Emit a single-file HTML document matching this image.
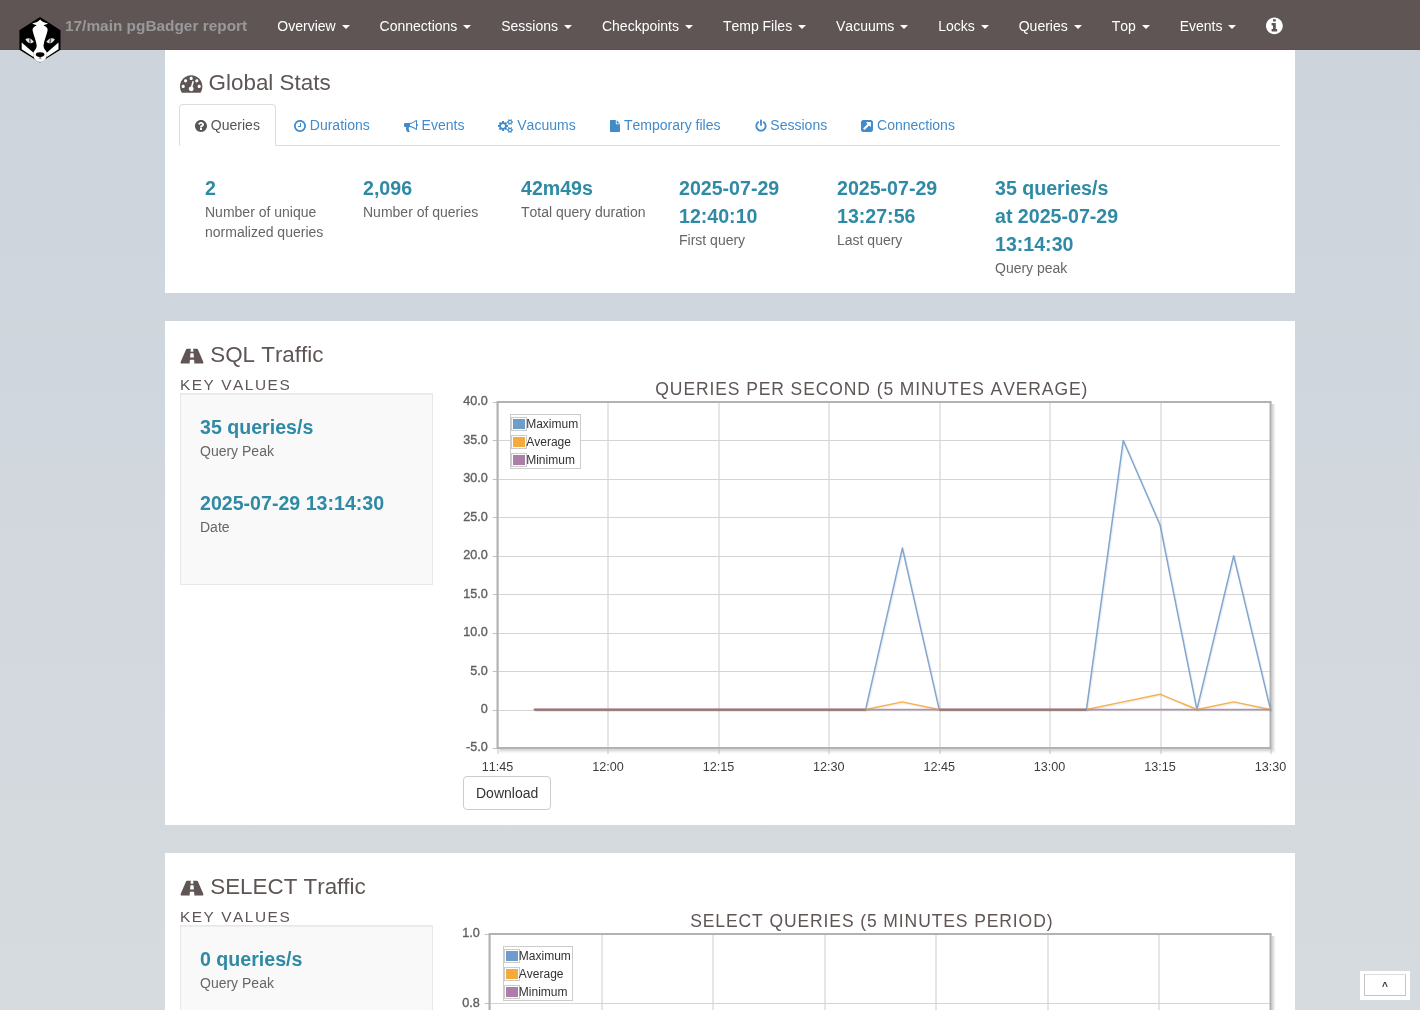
<!DOCTYPE html>
<html lang="en"><head><meta charset="utf-8"><title>pgBadger :: 17/main</title>
<style>
*{box-sizing:border-box}
html,body{margin:0;padding:0}
html{height:100%;overflow:hidden}
body{
  font-kerning:none;font-variant-ligatures:none;
  width:1420px;height:1010px;position:relative;overflow:hidden;
  font-family:"Liberation Sans",sans-serif;font-size:14px;line-height:20px;color:#333;
  background:linear-gradient(180deg,#cdd4dc 0px,#cdd4dc 50px,#d6dbdf 1010px);
}
a{text-decoration:none;color:#428bca}
ul{list-style:none;margin:0;padding:0}
svg.fa{position:relative;top:1px;height:1em;vertical-align:-0.142857em;fill:currentColor;display:inline-block;overflow:visible}

/* ---------- navbar ---------- */
#navbar{will-change:transform;position:absolute;left:0;top:0;width:1420px;height:50px;background:#5f5555;border-bottom:1px solid #5c5150;z-index:10}
#logo{position:absolute;left:18px;top:15px;width:44px;height:49px;z-index:11}
#brand{position:absolute;left:50px;top:1px;height:50px;padding:15px;font-size:15.4px;line-height:20px;font-weight:bold;color:#999;white-space:nowrap}
#menu{position:absolute;left:262.3px;top:1px;height:50px;white-space:nowrap;display:flex}
#menu li{display:block}
#menu li a{display:block;padding:15px;line-height:20px;color:#fff;font-size:14px}
.caret{display:inline-block;width:0;height:0;margin-left:2px;vertical-align:middle;border-top:4px solid #fff;border-right:4px solid transparent;border-left:4px solid transparent}
#menu li a .fa{font-size:19.6px;top:0}

/* ---------- sections ---------- */
.item{will-change:transform;position:absolute;left:165px;width:1130px;background:#fff}
.item h2{position:absolute;left:15px;margin:0;font-size:22.4px;line-height:24.64px;font-weight:normal;color:#5f5555;white-space:nowrap}
h3{margin:0;font-size:15.4px;line-height:17px;font-weight:normal;letter-spacing:1.54px;text-transform:uppercase;color:#5f5555;white-space:nowrap}

/* tabs */
.tabs{position:absolute;left:14px;top:55px;width:1101px;height:42px;border-bottom:1px solid #ddd;display:flex}
.tabs li{margin-right:2px;margin-bottom:-1px}
.tabs li a{display:block;padding:10px 15px;line-height:20px;border:1px solid transparent;border-radius:4px 4px 0 0;height:42px;white-space:nowrap}
.tabs li.active a{color:#555;background:#fff;border-color:#ddd;border-bottom-color:#fff}

/* key figures (global stats) */
.kf{position:absolute;left:40px;top:125px;display:flex}
.kf li{width:158px;padding-right:25px}
.figure{display:block;font-size:19.6px;line-height:28px;font-weight:bold;color:#2e8aa5}
.figure-label{display:block;color:#666;line-height:20px}

/* key values well */
.well{position:absolute;left:15px;width:252.5px;background:#f9f9f9;border:1px solid #e8e8e8;box-shadow:inset 0 1px 1px rgba(0,0,0,.05);padding:19px}
.well li{height:76px}

/* chart */
.chart{position:absolute;left:297px;width:818px;font-family:"Liberation Sans",sans-serif}
.chart svg{position:absolute;left:0;top:0}
.chart .title{position:absolute;width:818px;text-align:center;font-size:17.5px;line-height:22px;letter-spacing:0.9px;color:#5f5555;text-transform:uppercase;white-space:nowrap}
.chart .yt{position:absolute;right:792px;font-size:12.6px;line-height:14px;color:#606060;-webkit-text-stroke:0.35px #606060;white-space:nowrap;text-align:right}
.chart .xt{position:absolute;width:60px;margin-left:-30px;text-align:center;font-size:12.6px;line-height:14px;color:#3c3c3c;white-space:nowrap}
.legend{position:absolute;background:#fff;border:1px solid #ccc;font-size:12px;color:#333;padding:0;height:55.2px;width:70.8px}
.legend div.row{height:18px;display:flex;align-items:center;white-space:nowrap;padding-right:1px}
.legend .sw{display:block;width:16px;height:14px;border:1px solid #ccc;padding:1px;margin-left:0px;margin-right:-0.8px}
.legend .sw i{display:block;width:12px;height:10px}
.btn{position:absolute;display:block;height:34px;padding:6px 12px;line-height:20px;border:1px solid #ccc;border-radius:4px;color:#333;background:#fff;font-size:14px;white-space:nowrap}

#totop{will-change:transform;position:absolute;left:1360px;top:971px;width:50px;height:29px;background:#fff;z-index:20}
#totop span{position:absolute;left:4px;top:3px;width:42px;height:22px;border:1px solid #c4c4c4;border-top-color:#ddd;font-size:10px;font-weight:bold;line-height:24px;text-align:center;color:#333;background:#fff}

</style></head>
<body>
<div id="navbar">
  <a id="brand" href="#">17/main pgBadger report</a>
  <ul id="menu">
    <li><a href="#">Overview <b class="caret"></b></a></li>
    <li><a href="#">Connections <b class="caret"></b></a></li>
    <li><a href="#">Sessions <b class="caret"></b></a></li>
    <li><a href="#">Checkpoints <b class="caret"></b></a></li>
    <li><a href="#">Temp Files <b class="caret"></b></a></li>
    <li><a href="#">Vacuums <b class="caret"></b></a></li>
    <li><a href="#">Locks <b class="caret"></b></a></li>
    <li><a href="#">Queries <b class="caret"></b></a></li>
    <li><a href="#">Top <b class="caret"></b></a></li>
    <li><a href="#">Events <b class="caret"></b></a></li>
    <li><a href="#"><svg class="fa " viewBox="0 -1536 1536 1792" style="width:0.8571em"><path transform="matrix(1.0000 0 0 -1.0000 0.0 0.0)" d="M1024 160C1024 142 1010 128 992 128H544C526 128 512 142 512 160V320C512 338 526 352 544 352H640V672H544C526 672 512 686 512 704V864C512 882 526 896 544 896H864C882 896 896 882 896 864V352H992C1010 352 1024 338 1024 320V160ZM896 1056C896 1038 882 1024 864 1024H672C654 1024 640 1038 640 1056V1216C640 1234 654 1248 672 1248H864C882 1248 896 1234 896 1216V1056ZM1536 640C1536 1064 1192 1408 768 1408C344 1408 0 1064 0 640C0 216 344 -128 768 -128C1192 -128 1536 216 1536 640Z"/></svg></a></li>
  </ul>
</div>
<svg id="logo" viewBox="18 15 44 49" aria-label="pgBadger logo">
  <path d="M40 18L59.7 30.6V49.4L40 61.6L20.2 49.4V30.6Z" fill="#000" stroke="#000" stroke-width="1.6" stroke-linejoin="round"/>
  <!-- cheeks -->
  <path d="M21.7 42.6L33.2 52.6L33.4 57.1L21.7 49.3Z" fill="#fff"/>
  <path d="M58.5 42.6L47 52.6L46.8 57.1L58.5 49.3Z" fill="#fff"/>
  <!-- central stripe + snout -->
  <path d="M40.1 19.4C41.3 21.2 44.5 22.6 48 23.6C46 24.6 44.6 24.9 43.6 25.6C46.6 27 48 28.6 47.6 30.6C46.6 35.6 44 40.6 43.5 45.6C43.5 48 44.6 49.3 46 51C47.6 53 47.4 57 45 59.6C43.4 61.3 41.6 62 40.1 62C38.6 62 36.8 61.3 35.2 59.6C32.8 57 32.6 53 34.2 51C35.6 49.3 36.7 48 36.7 45.6C36.2 40.6 33.6 35.6 32.6 30.6C32.2 28.6 33.6 27 36.6 25.6C35.6 24.9 34.2 24.6 32.2 23.6C35.7 22.6 38.9 21.2 40.1 19.4Z" fill="#fff"/>
  <!-- nose -->
  <ellipse cx="40.1" cy="54.6" rx="4.3" ry="2.3" fill="#000"/>
  <path d="M40.1 56V58.6" stroke="#000" stroke-width="0.9" fill="none"/>
  <path d="M38.2 58.4Q40.1 59.6 42 58.4" stroke="#999" stroke-width="0.6" fill="none"/>
  <!-- eyes -->
  <path d="M25.4 39.3C27.6 37.4 31 37.8 33.8 41.8C31.6 44.2 27.6 44 25.4 39.3Z" fill="#e4e4e4"/>
  <path d="M54.8 39.3C52.6 37.4 49.2 37.8 46.4 41.8C48.6 44.2 52.6 44 54.8 39.3Z" fill="#e4e4e4"/>
  <ellipse cx="29.9" cy="40.9" rx="0.9" ry="2.6" fill="#666" transform="rotate(-8 29.9 40.9)"/>
  <ellipse cx="50.3" cy="40.9" rx="0.9" ry="2.6" fill="#666" transform="rotate(8 50.3 40.9)"/>
</svg>


<div class="item" id="global-stats" style="top:49px;height:244px">
  <h2 style="top:22px"><svg class="fa " viewBox="0 -1536 1792 1792" style="width:1.0000em"><path transform="matrix(1.0000 0 0 -1.0000 0.0 0.0)" d="M384 384C384 313 327 256 256 256C185 256 128 313 128 384C128 455 185 512 256 512C327 512 384 455 384 384ZM576 832C576 761 519 704 448 704C377 704 320 761 320 832C320 903 377 960 448 960C519 960 576 903 576 832ZM1004 351C1069 306 1103 224 1082 143C1055 41 950 -21 847 6C745 33 683 138 710 241C732 322 801 377 880 383L981 765C990 799 1025 820 1059 811C1093 802 1113 767 1105 733ZM1664 384C1664 313 1607 256 1536 256C1465 256 1408 313 1408 384C1408 455 1465 512 1536 512C1607 512 1664 455 1664 384ZM1024 1024C1024 953 967 896 896 896C825 896 768 953 768 1024C768 1095 825 1152 896 1152C967 1152 1024 1095 1024 1024ZM1472 832C1472 761 1415 704 1344 704C1273 704 1216 761 1216 832C1216 903 1273 960 1344 960C1415 960 1472 903 1472 832ZM1792 384C1792 878 1390 1280 896 1280C402 1280 0 878 0 384C0 212 49 45 141 -99C153 -117 173 -128 195 -128H1597C1619 -128 1639 -117 1651 -99C1743 46 1792 212 1792 384Z"/></svg> Global Stats</h2>
  <ul class="tabs">
    <li class="active"><a href="#"><svg class="fa " viewBox="0 -1536 1536 1792" style="width:0.8571em"><path transform="matrix(1.0000 0 0 -1.0000 0.0 0.0)" d="M896 160C896 142 882 128 864 128H672C654 128 640 142 640 160V352C640 370 654 384 672 384H864C882 384 896 370 896 352V160ZM1152 832C1152 680 1048 622 972 579C925 552 896 503 896 480C896 462 882 448 864 448H672C654 448 640 462 640 480V516C640 613 737 696 808 728C869 756 896 782 896 834C896 878 837 919 773 919C737 919 704 907 687 895C668 881 648 863 601 803C595 795 585 791 576 791C569 791 562 793 557 797L425 897C412 907 408 925 417 939C503 1082 625 1152 788 1152C960 1152 1152 1015 1152 832ZM1536 640C1536 1064 1192 1408 768 1408C344 1408 0 1064 0 640C0 216 344 -128 768 -128C1192 -128 1536 216 1536 640Z"/></svg> Queries</a></li>
    <li><a href="#"><svg class="fa " viewBox="0 -1536 1536 1792" style="width:0.8571em"><path transform="matrix(1.0000 0 0 -1.0000 0.0 0.0)" d="M896 992C896 1010 882 1024 864 1024H800C782 1024 768 1010 768 992V640H544C526 640 512 626 512 608V544C512 526 526 512 544 512H864C882 512 896 526 896 544ZM1312 640C1312 340 1068 96 768 96C468 96 224 340 224 640C224 940 468 1184 768 1184C1068 1184 1312 940 1312 640ZM1536 640C1536 1064 1192 1408 768 1408C344 1408 0 1064 0 640C0 216 344 -128 768 -128C1192 -128 1536 216 1536 640Z"/></svg> Durations</a></li>
    <li><a href="#"><svg class="fa " viewBox="0 -1536 1792 1792" style="width:1.0000em"><path transform="matrix(1.0000 0 0 -1.0000 0.0 0.0)" d="M1664 896V1280C1664 1350 1606 1408 1536 1408C1344 1248 1024 1024 640 1024H160C72 1024 0 952 0 864V672C0 584 72 512 160 512H282C212 287 298 109 356 -69C448 -154 706 -152 768 -30C662 53 572 134 642 249C564 329 605 468 724 508C1071 479 1358 276 1536 128C1606 128 1664 186 1664 256V640C1735 640 1792 697 1792 768C1792 839 1735 896 1664 896ZM1536 292C1275 492 1022 605 768 633V903C1022 931 1275 1046 1536 1246Z"/></svg> Events</a></li>
    <li><a href="#"><svg class="fa " viewBox="0 -1536 1920 1792" style="width:1.0714em"><path transform="matrix(1.0000 0 0 -1.0000 0.0 0.0)" d="M896 640C896 499 781 384 640 384C499 384 384 499 384 640C384 781 499 896 640 896C781 896 896 781 896 640ZM1664 128C1664 58 1607 0 1536 0C1466 0 1408 57 1408 128C1408 198 1466 256 1536 256C1606 256 1664 198 1664 128ZM1664 1152C1664 1082 1607 1024 1536 1024C1466 1024 1408 1081 1408 1152C1408 1222 1466 1280 1536 1280C1606 1280 1664 1222 1664 1152ZM1280 731C1280 745 1270 758 1256 761L1104 784C1095 812 1083 839 1070 866C1098 905 1128 941 1157 980C1161 986 1164 992 1164 999C1164 1027 1046 1135 1020 1159C1014 1164 1007 1167 999 1167C992 1167 985 1165 979 1160L861 1071C837 1083 812 1094 786 1102L763 1255C761 1269 747 1280 733 1280H547C533 1280 521 1270 517 1256C504 1207 499 1152 494 1102C467 1093 442 1083 417 1070L302 1160C296 1164 289 1167 281 1167C252 1167 140 1046 120 1019C115 1013 113 1006 113 999C113 992 116 985 120 979C152 941 182 904 210 864C197 839 186 814 178 788L23 764C10 762 0 747 0 734V549C0 535 10 522 24 520L176 496C185 468 197 441 211 414C182 375 152 338 123 300C119 294 116 288 116 281C116 252 234 145 260 121C266 116 273 113 281 113C288 113 296 115 301 120L419 209C443 197 468 186 494 178L517 25C519 11 533 0 547 0H733C747 0 759 10 763 24C776 73 781 128 786 179C813 187 838 197 863 210L978 120C984 116 991 113 999 113C1028 113 1140 235 1160 262C1165 267 1167 274 1167 281C1167 289 1164 295 1160 301C1128 339 1098 376 1070 416C1083 441 1094 466 1102 492L1257 516C1270 518 1280 533 1280 546ZM1920 198C1920 213 1791 227 1771 229C1763 247 1753 265 1741 281C1750 301 1792 401 1792 419C1792 421 1791 424 1788 426C1776 433 1669 496 1664 496L1658 494C1624 460 1594 421 1566 382C1556 383 1546 384 1536 384C1526 384 1516 383 1506 382C1496 397 1421 496 1408 496C1403 496 1296 432 1284 426C1281 424 1280 421 1280 419C1280 402 1322 301 1331 281C1319 265 1309 247 1301 229C1281 227 1152 213 1152 198V58C1152 43 1281 29 1301 27C1309 8 1319 -9 1331 -25C1322 -45 1280 -146 1280 -163C1280 -165 1281 -168 1284 -170C1296 -177 1403 -241 1408 -241C1421 -241 1496 -141 1506 -126C1516 -127 1526 -128 1536 -128C1546 -128 1556 -127 1566 -126C1576 -141 1651 -241 1664 -241C1669 -241 1776 -177 1788 -170C1791 -168 1792 -166 1792 -163C1792 -145 1750 -45 1741 -25C1753 -9 1763 8 1771 27C1791 29 1920 43 1920 58ZM1920 1222C1920 1237 1791 1251 1771 1253C1763 1271 1753 1289 1741 1305C1750 1325 1792 1425 1792 1443C1792 1445 1791 1448 1788 1450C1776 1457 1669 1520 1664 1520L1658 1518C1624 1484 1594 1445 1566 1406C1556 1407 1546 1408 1536 1408C1526 1408 1516 1407 1506 1406C1496 1421 1421 1520 1408 1520C1403 1520 1296 1456 1284 1450C1281 1448 1280 1445 1280 1443C1280 1426 1322 1325 1331 1305C1319 1289 1309 1271 1301 1253C1281 1251 1152 1237 1152 1222V1082C1152 1067 1281 1053 1301 1051C1309 1032 1319 1015 1331 999C1322 979 1280 878 1280 861C1280 859 1281 856 1284 854C1296 847 1403 783 1408 783C1421 783 1496 883 1506 898C1516 897 1526 896 1536 896C1546 896 1556 897 1566 898C1576 883 1651 783 1664 783C1669 783 1776 847 1788 854C1791 856 1792 858 1792 861C1792 879 1750 979 1741 999C1753 1015 1763 1032 1771 1051C1791 1053 1920 1067 1920 1082Z"/></svg> Vacuums</a></li>
    <li><a href="#"><svg class="fa " viewBox="0 -1536 1344 1792" style="width:0.7500em"><path transform="matrix(0.8333 0 0 -0.8571 0.0 -91.4)" d="M1024 1024H1496C1487 1038 1478 1050 1468 1060L1060 1468C1050 1478 1038 1487 1024 1496ZM896 992V1536H96C43 1536 0 1493 0 1440V-160C0 -213 43 -256 96 -256H1440C1493 -256 1536 -213 1536 -160V896H992C939 896 896 939 896 992Z"/></svg> Temporary files</a></li>
    <li><a href="#"><svg class="fa " viewBox="0 -1536 1536 1792" style="width:0.8571em"><path transform="matrix(0.9300 0 0 -0.9300 53.8 -44.8)" d="M1536 640C1536 883 1424 1107 1229 1253C1173 1296 1092 1285 1050 1228C1007 1172 1019 1091 1075 1049C1205 951 1280 802 1280 640C1280 358 1050 128 768 128C486 128 256 358 256 640C256 802 331 951 461 1049C517 1091 529 1172 486 1228C444 1285 364 1296 307 1253C112 1107 0 883 0 640C0 217 345 -128 768 -128C1191 -128 1536 217 1536 640ZM896 1408C896 1478 838 1536 768 1536C698 1536 640 1478 640 1408V768C640 698 698 640 768 640C838 640 896 698 896 768Z"/></svg> Sessions</a></li>
    <li><a href="#"><svg class="fa " viewBox="0 -1536 1536 1792" style="width:0.8571em"><path transform="matrix(1.0000 0 0 -1.0000 0.0 0.0)" d="M1280 608C1280 582 1264 559 1241 549C1233 546 1224 544 1216 544C1199 544 1183 550 1171 563L1027 707L493 173C468 148 428 148 403 173L301 275C276 300 276 340 301 365L835 899L691 1043C672 1061 667 1089 677 1113C687 1136 710 1152 736 1152H1216C1251 1152 1280 1123 1280 1088V608ZM1536 1120C1536 1279 1407 1408 1248 1408H288C129 1408 0 1279 0 1120V160C0 1 129 -128 288 -128H1248C1407 -128 1536 1 1536 160Z"/></svg> Connections</a></li>
  </ul>
  <ul class="kf">
    <li><span class="figure">2</span><span class="figure-label">Number of unique normalized queries</span></li>
    <li><span class="figure">2,096</span><span class="figure-label">Number of queries</span></li>
    <li><span class="figure">42m49s</span><span class="figure-label">Total query duration</span></li>
    <li><span class="figure">2025-07-29 12:40:10</span><span class="figure-label">First query</span></li>
    <li><span class="figure">2025-07-29 13:27:56</span><span class="figure-label">Last query</span></li>
    <li><span class="figure">35 queries/s at 2025-07-29 13:14:30</span><span class="figure-label">Query peak</span></li>
  </ul>
</div>

<div class="item" id="sql-traffic" style="top:321px;height:504px">
  <h2 style="top:22px"><svg class="fa " viewBox="0 -1536 1920 1792" style="width:1.0714em"><path transform="matrix(1.0000 0 0 -0.9200 0.0 24.0)" d="M1111 540C1112 524 1097 512 1082 512H838C823 512 808 524 809 540V544L833 864C834 882 850 896 867 896H1053C1070 896 1086 882 1087 864L1111 544V540ZM1870 73C1870 113 1859 153 1844 189L1427 1233C1417 1258 1390 1280 1363 1280H1024C1041 1280 1057 1266 1058 1248L1073 1056C1074 1038 1061 1024 1043 1024H877C859 1024 846 1038 847 1056L862 1248C863 1266 879 1280 896 1280H557C530 1280 503 1258 493 1233L76 189C61 153 50 113 50 73C50 44 58 0 96 0H800C783 0 769 14 770 32L790 288C791 306 807 320 824 320H1096C1113 320 1129 306 1130 288L1150 32C1151 14 1137 0 1120 0H1824C1862 0 1870 44 1870 73Z"/></svg> SQL Traffic</h2>
  <h3 style="position:absolute;left:15px;top:55px">Key values</h3>
  <div class="well" style="top:72px;height:192px">
    <ul>
      <li><span class="figure">35 queries/s</span><span class="figure-label">Query Peak</span></li>
      <li><span class="figure">2025-07-29 13:14:30</span><span class="figure-label">Date</span></li>
    </ul>
  </div>
  <div class="chart" style="top:54px;height:403.0px">
<svg width="830" height="403.0" viewBox="0 0 830 403.0" style="overflow:visible">
<path d="M810.00 29.00V374.50H37.50" fill="none" stroke="#000" stroke-opacity="0.13" stroke-width="1.6"/>
<path d="M811.00 29.00V375.50H37.50" fill="none" stroke="#000" stroke-opacity="0.085" stroke-width="1.6"/>
<path d="M812.00 29.00V376.50H37.50" fill="none" stroke="#000" stroke-opacity="0.05" stroke-width="1.6"/>
<path d="M813.00 29.00V377.50H37.50" fill="none" stroke="#000" stroke-opacity="0.02" stroke-width="1.6"/>
<rect x="35.50" y="27.00" width="773.00" height="346.00" fill="#fff"/>
<path d="M36.00 27.00V373.00M146.00 27.00V373.00M257.00 27.00V373.00M367.00 27.00V373.00M478.00 27.00V373.00M588.00 27.00V373.00M699.00 27.00V373.00M809.00 27.00V373.00" fill="none" stroke="#cccccc" stroke-width="1"/>
<path d="M35.50 27.50H808.50M35.50 65.50H808.50M35.50 104.50H808.50M35.50 142.50H808.50M35.50 181.50H808.50M35.50 219.50H808.50M35.50 258.50H808.50M35.50 296.50H808.50M35.50 335.50H808.50M35.50 373.50H808.50" fill="none" stroke="#d4d4d4" stroke-width="1"/>
<path d="M36.00 373.00v6M146.00 373.00v6M257.00 373.00v6M367.00 373.00v6M478.00 373.00v6M588.00 373.00v6M699.00 373.00v6M809.00 373.00v6M35.50 27.50h-4.7M35.50 65.50h-4.7M35.50 104.50h-4.7M35.50 142.50h-4.7M35.50 181.50h-4.7M35.50 219.50h-4.7M35.50 258.50h-4.7M35.50 296.50h-4.7M35.50 335.50h-4.7M35.50 373.50h-4.7" fill="none" stroke="#c2c2c2" stroke-width="1"/>
<rect x="35.50" y="27.00" width="773.00" height="346.00" fill="none" stroke="#b2b2b2" stroke-width="2"/>
<path d="M72.31 334.56L109.12 334.56L145.93 334.56L182.74 334.56L219.55 334.56L256.36 334.56L293.17 334.56L329.98 334.56L366.79 334.56L403.60 334.56L440.40 173.09L477.21 334.56L514.02 334.56L550.83 334.56L587.64 334.56L624.45 334.56L661.26 65.44L698.07 150.02L734.88 334.56L771.69 180.78L808.50 334.56" transform="translate(1,1)" fill="none" stroke="#000" stroke-opacity="0.06" stroke-width="2.1" stroke-linejoin="round"/>
<path d="M72.31 334.56L109.12 334.56L145.93 334.56L182.74 334.56L219.55 334.56L256.36 334.56L293.17 334.56L329.98 334.56L366.79 334.56L403.60 334.56L440.40 173.09L477.21 334.56L514.02 334.56L550.83 334.56L587.64 334.56L624.45 334.56L661.26 65.44L698.07 150.02L734.88 334.56L771.69 180.78L808.50 334.56" fill="none" stroke="#80a7d1" stroke-width="1.5" stroke-linejoin="round" stroke-linecap="round"/>
<path d="M72.31 334.56L109.12 334.56L145.93 334.56L182.74 334.56L219.55 334.56L256.36 334.56L293.17 334.56L329.98 334.56L366.79 334.56L403.60 334.56L440.40 326.87L477.21 334.56L514.02 334.56L550.83 334.56L587.64 334.56L624.45 334.56L661.26 326.87L698.07 319.18L734.88 334.56L771.69 326.87L808.50 334.56" transform="translate(1,1)" fill="none" stroke="#000" stroke-opacity="0.06" stroke-width="2.1" stroke-linejoin="round"/>
<path d="M72.31 334.56L109.12 334.56L145.93 334.56L182.74 334.56L219.55 334.56L256.36 334.56L293.17 334.56L329.98 334.56L366.79 334.56L403.60 334.56L440.40 326.87L477.21 334.56L514.02 334.56L550.83 334.56L587.64 334.56L624.45 334.56L661.26 326.87L698.07 319.18L734.88 334.56L771.69 326.87L808.50 334.56" fill="none" stroke="#f4b24e" stroke-width="1.5" stroke-linejoin="round" stroke-linecap="round"/>
<path d="M72.31 334.56L109.12 334.56L145.93 334.56L182.74 334.56L219.55 334.56L256.36 334.56L293.17 334.56L329.98 334.56L366.79 334.56L403.60 334.56L440.40 334.56L477.21 334.56L514.02 334.56L550.83 334.56L587.64 334.56L624.45 334.56L661.26 334.56L698.07 334.56L734.88 334.56L771.69 334.56L808.50 334.56" transform="translate(1,1)" fill="none" stroke="#000" stroke-opacity="0.06" stroke-width="2.1" stroke-linejoin="round"/>
<path d="M72.31 334.56L109.12 334.56L145.93 334.56L182.74 334.56L219.55 334.56L256.36 334.56L293.17 334.56L329.98 334.56L366.79 334.56L403.60 334.56L440.40 334.56L477.21 334.56L514.02 334.56L550.83 334.56L587.64 334.56L624.45 334.56L661.26 334.56L698.07 334.56L734.88 334.56L771.69 334.56L808.50 334.56" fill="none" stroke="#b58fb3" stroke-width="1.5" stroke-linejoin="round" stroke-linecap="round"/>
<path d="M72.31 334.11H403.60" fill="none" stroke="#b37f88" stroke-width="1"/>
<path d="M72.31 335.06H403.60" fill="none" stroke="#7a6868" stroke-width="1"/>
<path d="M477.21 334.11H624.45" fill="none" stroke="#b37f88" stroke-width="1"/>
<path d="M477.21 335.06H624.45" fill="none" stroke="#7a6868" stroke-width="1"/>
</svg>
<div class="title" style="top:3.1px;left:0.8px">Queries per second (5 minutes average)</div>
<div class="yt" style="top:19.4px;right:792.3px">40.0</div>
<div class="yt" style="top:57.8px;right:792.3px">35.0</div>
<div class="yt" style="top:96.3px;right:792.3px">30.0</div>
<div class="yt" style="top:134.7px;right:792.3px">25.0</div>
<div class="yt" style="top:173.2px;right:792.3px">20.0</div>
<div class="yt" style="top:211.6px;right:792.3px">15.0</div>
<div class="yt" style="top:250.1px;right:792.3px">10.0</div>
<div class="yt" style="top:288.5px;right:792.3px">5.0</div>
<div class="yt" style="top:327.0px;right:792.3px">0</div>
<div class="yt" style="top:365.4px;right:792.3px">-5.0</div>
<div class="xt" style="left:35.5px;top:385.4px">11:45</div>
<div class="xt" style="left:145.9px;top:385.4px">12:00</div>
<div class="xt" style="left:256.4px;top:385.4px">12:15</div>
<div class="xt" style="left:366.8px;top:385.4px">12:30</div>
<div class="xt" style="left:477.2px;top:385.4px">12:45</div>
<div class="xt" style="left:587.6px;top:385.4px">13:00</div>
<div class="xt" style="left:698.1px;top:385.4px">13:15</div>
<div class="xt" style="left:808.5px;top:385.4px">13:30</div>
<div class="legend" style="left:48.0px;top:39.2px">
<div class="row"><span class="sw"><i style="background:#6e9dc9"></i></span><span>Maximum</span></div>
<div class="row"><span class="sw"><i style="background:#f4ab3a"></i></span><span>Average</span></div>
<div class="row"><span class="sw"><i style="background:#ac7fa8"></i></span><span>Minimum</span></div>
</div>
<a class="btn" href="#" style="left:1px;top:401.0px">Download</a>
</div>
</div>

<div class="item" id="select-traffic" style="top:853px;height:504px">
  <h2 style="top:22px"><svg class="fa " viewBox="0 -1536 1920 1792" style="width:1.0714em"><path transform="matrix(1.0000 0 0 -0.9200 0.0 24.0)" d="M1111 540C1112 524 1097 512 1082 512H838C823 512 808 524 809 540V544L833 864C834 882 850 896 867 896H1053C1070 896 1086 882 1087 864L1111 544V540ZM1870 73C1870 113 1859 153 1844 189L1427 1233C1417 1258 1390 1280 1363 1280H1024C1041 1280 1057 1266 1058 1248L1073 1056C1074 1038 1061 1024 1043 1024H877C859 1024 846 1038 847 1056L862 1248C863 1266 879 1280 896 1280H557C530 1280 503 1258 493 1233L76 189C61 153 50 113 50 73C50 44 58 0 96 0H800C783 0 769 14 770 32L790 288C791 306 807 320 824 320H1096C1113 320 1129 306 1130 288L1150 32C1151 14 1137 0 1120 0H1824C1862 0 1870 44 1870 73Z"/></svg> SELECT Traffic</h2>
  <h3 style="position:absolute;left:15px;top:55px">Key values</h3>
  <div class="well" style="top:72px;height:192px">
    <ul>
      <li><span class="figure">0 queries/s</span><span class="figure-label">Query Peak</span></li>
      <li><span class="figure">1970-01-01 00:00:00</span><span class="figure-label">Date</span></li>
    </ul>
  </div>
  <div class="chart" style="top:54px;height:403.0px">
<svg width="830" height="403.0" viewBox="0 0 830 403.0" style="overflow:visible">
<path d="M810.00 29.00V374.50H29.50" fill="none" stroke="#000" stroke-opacity="0.13" stroke-width="1.6"/>
<path d="M811.00 29.00V375.50H29.50" fill="none" stroke="#000" stroke-opacity="0.085" stroke-width="1.6"/>
<path d="M812.00 29.00V376.50H29.50" fill="none" stroke="#000" stroke-opacity="0.05" stroke-width="1.6"/>
<path d="M813.00 29.00V377.50H29.50" fill="none" stroke="#000" stroke-opacity="0.02" stroke-width="1.6"/>
<rect x="27.50" y="27.00" width="781.00" height="346.00" fill="#fff"/>
<path d="M28.00 27.00V373.00M140.00 27.00V373.00M251.00 27.00V373.00M363.00 27.00V373.00M474.00 27.00V373.00M586.00 27.00V373.00M697.00 27.00V373.00M809.00 27.00V373.00" fill="none" stroke="#cccccc" stroke-width="1"/>
<path d="M27.50 27.50H808.50M27.50 96.50H808.50M27.50 165.50H808.50M27.50 235.50H808.50M27.50 304.50H808.50M27.50 373.50H808.50" fill="none" stroke="#d4d4d4" stroke-width="1"/>
<path d="M28.00 373.00v6M140.00 373.00v6M251.00 373.00v6M363.00 373.00v6M474.00 373.00v6M586.00 373.00v6M697.00 373.00v6M809.00 373.00v6M27.50 27.50h-4.7M27.50 96.50h-4.7M27.50 165.50h-4.7M27.50 235.50h-4.7M27.50 304.50h-4.7M27.50 373.50h-4.7" fill="none" stroke="#c2c2c2" stroke-width="1"/>
<rect x="27.50" y="27.00" width="781.00" height="346.00" fill="none" stroke="#b2b2b2" stroke-width="2"/>
</svg>
<div class="title" style="top:3.1px;left:0.8px">SELECT queries (5 minutes period)</div>
<div class="yt" style="top:19.4px;right:800.3px">1.0</div>
<div class="yt" style="top:88.6px;right:800.3px">0.8</div>
<div class="yt" style="top:157.8px;right:800.3px">0.6</div>
<div class="yt" style="top:227.0px;right:800.3px">0.4</div>
<div class="yt" style="top:296.2px;right:800.3px">0.2</div>
<div class="yt" style="top:365.4px;right:800.3px">0</div>
<div class="xt" style="left:27.5px;top:385.4px">11:45</div>
<div class="xt" style="left:139.1px;top:385.4px">12:00</div>
<div class="xt" style="left:250.6px;top:385.4px">12:15</div>
<div class="xt" style="left:362.2px;top:385.4px">12:30</div>
<div class="xt" style="left:473.8px;top:385.4px">12:45</div>
<div class="xt" style="left:585.4px;top:385.4px">13:00</div>
<div class="xt" style="left:696.9px;top:385.4px">13:15</div>
<div class="xt" style="left:808.5px;top:385.4px">13:30</div>
<div class="legend" style="left:40.6px;top:39.0px">
<div class="row"><span class="sw"><i style="background:#6e9dc9"></i></span><span>Maximum</span></div>
<div class="row"><span class="sw"><i style="background:#f4ab3a"></i></span><span>Average</span></div>
<div class="row"><span class="sw"><i style="background:#ac7fa8"></i></span><span>Minimum</span></div>
</div>
<a class="btn" href="#" style="left:1px;top:401.0px">Download</a>
</div>
</div>

<div id="totop"><span>^</span></div>

</body></html>
